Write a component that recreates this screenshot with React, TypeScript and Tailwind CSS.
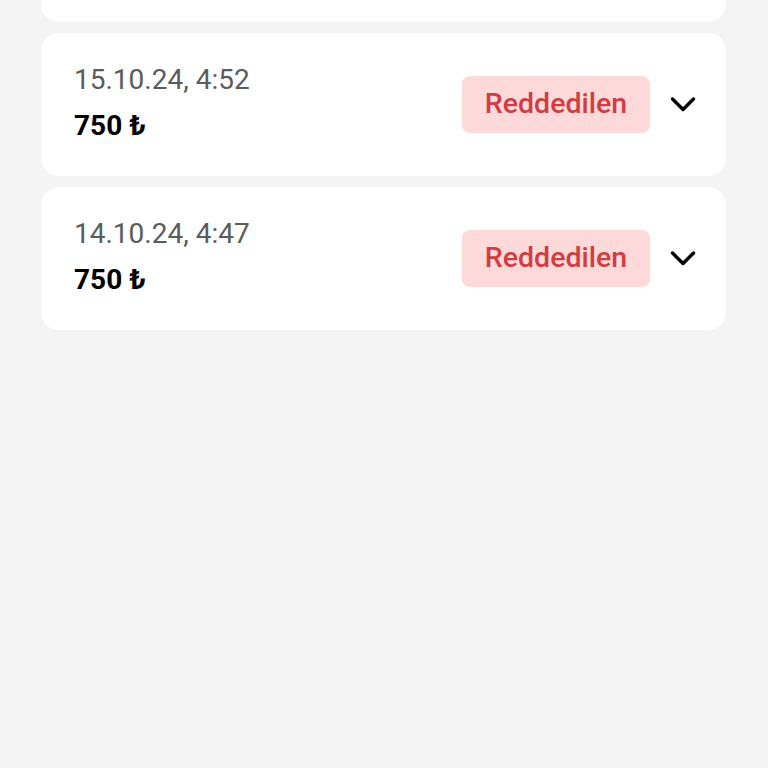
const items = [
  { id: 2, date: "15.10.24, 4:52", amount: "750 ₺", status: "Reddedilen" },
  { id: 3, date: "14.10.24, 4:47", amount: "750 ₺", status: "Reddedilen" },
];

function Chevron() {
  return (
    <svg width="26" height="26" viewBox="0 0 26 26" fill="none">
      <path
        d="M2.5 7 L13 17.5 L23.5 7"
        stroke="#000"
        strokeWidth="3.4"
        strokeLinecap="round"
        strokeLinejoin="round"
      />
    </svg>
  );
}

function TransactionCard({ date, amount, status }: { date: string; amount: string; status: string }) {
  return (
    <div className="flex h-[143px] items-center justify-between rounded-[18px] bg-white pl-[33px] pr-[30px]">
      <div className="flex flex-col gap-[12px] pb-[3px]">
        <span className="text-[28px] leading-[34px] text-[#5c5c5c]">{date}</span>
        <span className="text-[28px] font-bold leading-[34px] text-black">{amount}</span>
      </div>
      <div className="flex items-center gap-[20px]">
        <span className="flex h-[57px] w-[188px] items-center justify-center rounded-[8px] bg-[#fdd9d9] text-[28.5px] font-medium text-[#d23c43]">
          {status}
        </span>
        <Chevron />
      </div>
    </div>
  );
}

export default function App() {
  return (
    <div
      className="h-[768px] overflow-hidden bg-[#f4f4f4] px-[41px]"
      style={{ fontFamily: "Roboto, 'Noto Sans', sans-serif" }}
    >
      <div className="flex w-[685px] flex-col gap-[11px]">
        {/* previous card, scrolled mostly out of view */}
        <div className="h-[22px] rounded-b-[18px] bg-white" />
        {items.map((it) => (
          <TransactionCard key={it.id} date={it.date} amount={it.amount} status={it.status} />
        ))}
      </div>
    </div>
  );
}
